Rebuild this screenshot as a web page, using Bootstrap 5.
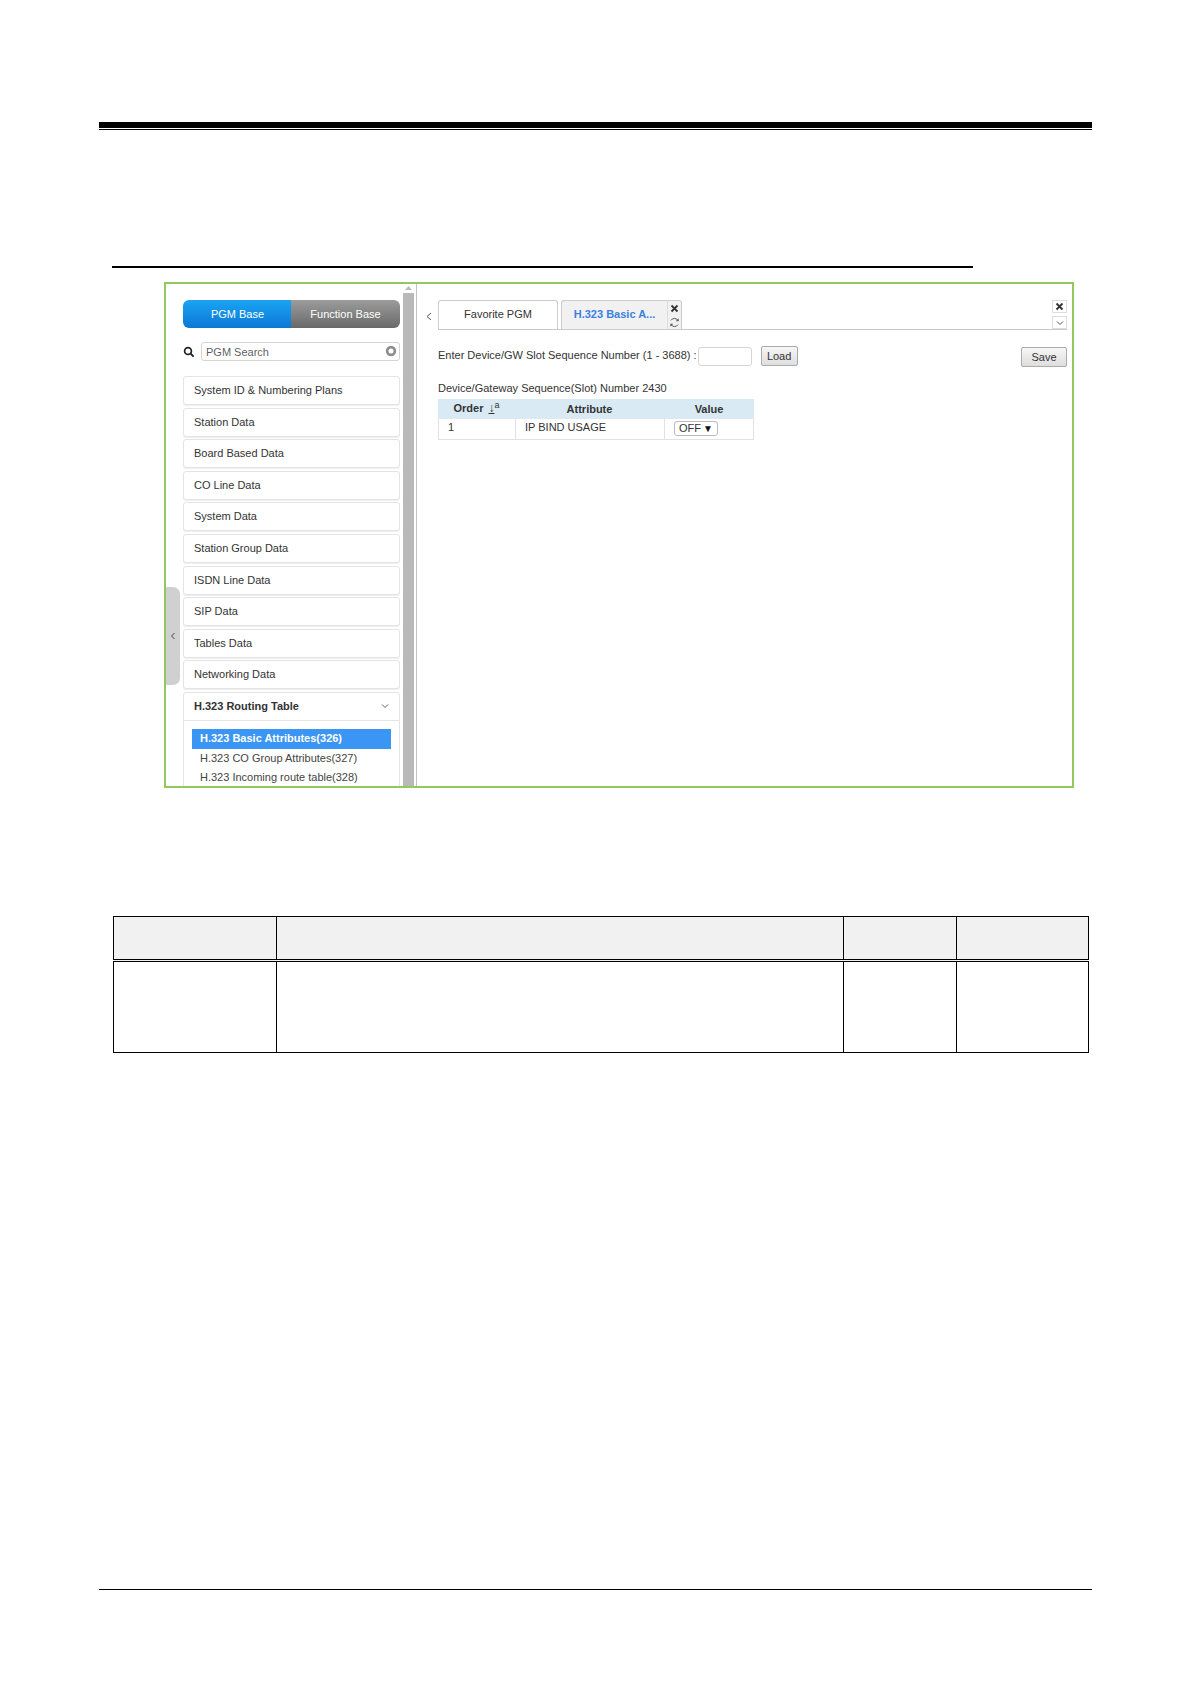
<!DOCTYPE html>
<html lang="en"><head><meta charset="utf-8"><title>H.323 Basic Attributes</title>
<link href="https://cdn.jsdelivr.net/npm/bootstrap@5.3.0/dist/css/bootstrap.min.css" rel="stylesheet">
<style>
html,body{background:#fff;margin:0}
body{font-family:"Liberation Sans",Arial,sans-serif;font-size:11px;color:#333;height:1684px;overflow:hidden}
.sheet{width:993px;margin-left:99px;padding-top:122px}
.head-rule{height:8px;border-top:6px solid #000;border-bottom:1px solid #000}
.sec-rule{width:861px;height:2px;background:#000;margin:136px 0 0 13px}
.shot{width:910px;height:506px;margin:14px 0 0 65px;border:2px solid #92c95c;overflow:hidden}
.side{width:251px;border-right:1px solid #c4c4c4;flex:none}
.gutter{width:17px;flex:none}
.handle{width:14px;height:98px;margin-top:303px;background:#d0d0d0;border-radius:0 7px 7px 0}
.side-main{width:217px;flex:none;padding-top:16px}
.base .btn{height:28px;font-size:11px;padding:0;color:#fff;border:0;font-weight:400;line-height:26px}
.b-blue{width:109px;flex:none!important;background:linear-gradient(#1ba4f2,#0b78d6)!important}
.b-gray{background:linear-gradient(#9c9c9c,#696969)!important}
.search-in{height:19px;min-height:0;width:199px;border:1px solid #d5d5d5;border-radius:3px;padding:0 4px;font-size:11px;color:#999}
.clear-ic{right:3px;top:3px}
.mt-search{margin-top:14px}
.items{margin-top:15px;gap:2.6px}
.s-item{background:#fff;border:1px solid #e4e4e4;border-radius:3px;height:29px;padding:0 10px;line-height:27px;box-shadow:0 1px 1px #eee}
.s-open{border:1px solid #e4e4e4;border-radius:3px;background:#fff}
.s-head{height:28px;padding:0 10px;line-height:27px;font-weight:700;border-bottom:1px solid #e4e4e4;color:#333}
.s-sub{padding:8px 8px 0}
.s-sub div{height:19.7px;line-height:19.7px;padding-left:8px;color:#444}
.s-sub .on{background:#3b95f4;color:#fff;font-weight:700}
.sbar{width:11px;margin-left:3px;flex:none;padding-top:0}
.sbar-up{height:9px}
.sbar-th{background:#b9b9b9;height:100%}
.panel{min-width:0}
.tabrow{margin:16px 5px 0 0;height:30px}
.tab-back{width:21px;flex:none;color:#555;padding:7px 0 0 3px}
.tabline{border-bottom:1px solid #c9c9c9;height:30px}
.t-a{width:120px;height:30px;border:1px solid #ccc;border-bottom:1px solid #c9c9c9;border-radius:3px 3px 0 0;text-align:center;line-height:27px;background:#fff}
.t-b{width:106px;height:30px;margin-left:3px;border:1px solid #ccc;border-right:0;border-radius:3px 0 0 0;background:#f1f1f1;color:#3b80e0;font-weight:700;text-align:center;line-height:27px;font-size:11px}
.t-x{width:15px;height:30px;border:1px solid #ccc;border-left:1px solid #ddd;background:#f1f1f1;border-radius:0 3px 0 0}
.t-x span{height:14px}
.win-btn{width:15px;height:13px;border:1px solid #ddd}
.win-col{gap:3px;padding-bottom:0}
.formrow{margin:15px 5px 0 21px}
.formrow>span{margin-top:-2px}
.num-in{width:54px;height:19px;min-height:0;margin-left:1px;border:1px solid #d5d5d5;border-radius:3px;padding:0}
.g-btn{border:1px solid #aaa;background:linear-gradient(#f6f6f6,#dedede);border-radius:2px;font-size:11px;color:#333;padding:0;line-height:18px}
.g-load{width:37px;height:20px;margin-left:9px}
.g-save{width:46px;height:20px;margin-top:2px}
.seq{margin:14px 0 0 21px;height:15px;line-height:15px}
.attr{width:316px;margin:3px 0 0 21px;table-layout:fixed;font-size:11px;border-collapse:separate;border-spacing:0}
.attr th{background:#d9eaf4;height:20px;padding:0 0 2px;font-weight:700;text-align:center;color:#333;border:0;box-shadow:none}
.attr td{height:21px;padding:0;border:0;border-bottom:1px solid #e2e2e2;color:#333;box-shadow:none}
.attr .sep{border-left:1px solid #e2e2e2}
.attr td:first-child{border-left:1px solid #e2e2e2;padding-left:9px}
.attr td:last-child{border-right:1px solid #e2e2e2}
.attr td.sep{padding-left:9px}
.sel{display:inline-flex;width:44px;height:15px;border:1px solid #bbb;border-radius:3px;align-items:center;justify-content:space-between;padding:0 4px;line-height:1;margin-top:2px}
.sel i{font-style:normal;font-size:10px;color:#111}
.sort{font-size:12px;margin-left:2px;font-weight:400}
.desc{width:975px;margin:128px 0 0 14px;table-layout:fixed;border-collapse:collapse;margin-bottom:0}
.desc th,.desc td{border:1px solid #000;padding:0;box-shadow:none}
.desc thead th{height:44px;background:#f1f1f1;border-bottom:3px double #000}
.desc td{height:92px;background:#fff}
.foot-rule{height:1px;background:#000;margin-top:536px}
</style></head>
<body>
<div class="sheet">
  <div class="head-rule"></div>
  <div class="sec-rule"></div>

  <div class="shot d-flex">
    <div class="side d-flex">
      <div class="gutter">
        <div class="handle d-flex align-items-center justify-content-center">
          <svg width="6" height="8" viewBox="0 0 6 8"><path d="M4.5 1 1.5 4l3 3" fill="none" stroke="#444" stroke-width="1"/></svg>
        </div>
      </div>
      <div class="side-main">
        <div class="btn-group base w-100" role="group">
          <button type="button" class="btn b-blue">PGM Base</button>
          <button type="button" class="btn b-gray">Function Base</button>
        </div>
        <div class="d-flex align-items-center justify-content-between mt-search">
          <svg width="12" height="12" viewBox="0 0 12 12"><circle cx="5" cy="5" r="3.4" fill="none" stroke="#222" stroke-width="1.7"/><path d="m7.6 7.6 3 3" stroke="#222" stroke-width="2"/></svg>
          <div class="position-relative">
            <input class="form-control search-in" placeholder="PGM Search" aria-label="PGM Search">
            <svg class="position-absolute clear-ic" width="12" height="12" viewBox="0 0 12 12"><circle cx="6" cy="6" r="5.2" fill="#8e8e8e"/><circle cx="6" cy="6" r="2.5" fill="#fff"/></svg>
          </div>
        </div>
        <div class="items d-flex flex-column">
          <div class="s-item">System ID &amp; Numbering Plans</div>
          <div class="s-item">Station Data</div>
          <div class="s-item">Board Based Data</div>
          <div class="s-item">CO Line Data</div>
          <div class="s-item">System Data</div>
          <div class="s-item">Station Group Data</div>
          <div class="s-item">ISDN Line Data</div>
          <div class="s-item">SIP Data</div>
          <div class="s-item">Tables Data</div>
          <div class="s-item">Networking Data</div>
          <div class="s-open">
            <div class="s-head d-flex justify-content-between align-items-center">H.323 Routing Table
              <svg width="8" height="6" viewBox="0 0 8 6"><path d="m1 1.5 3 3 3-3" fill="none" stroke="#666" stroke-width="1"/></svg>
            </div>
            <div class="s-sub">
              <div class="on">H.323 Basic Attributes(326)</div>
              <div>H.323 CO Group Attributes(327)</div>
              <div>H.323 Incoming route table(328)</div>
            </div>
          </div>
        </div>
      </div>
      <div class="sbar d-flex flex-column">
        <div class="sbar-up d-flex justify-content-center align-items-center">
          <svg width="7" height="4" viewBox="0 0 7 4"><path d="M3.5 0 7 4H0z" fill="#bbb"/></svg>
        </div>
        <div class="sbar-th flex-grow-1"></div>
      </div>
    </div>

    <div class="panel flex-grow-1">
      <div class="tabrow d-flex">
        <div class="tab-back text-center">
          <svg width="6" height="9" viewBox="0 0 6 9"><path d="M5 1 1 4.5 5 8" fill="none" stroke="#555" stroke-width="1"/></svg>
        </div>
        <div class="tabline flex-grow-1 d-flex justify-content-between">
          <div class="d-flex">
            <div class="t-a">Favorite PGM</div>
            <div class="t-b">H.323 Basic A...</div>
            <div class="t-x d-flex flex-column">
              <span class="d-flex align-items-center justify-content-center"><svg width="9" height="9" viewBox="0 0 9 9"><path d="m1.5 1.5 6 6m0-6-6 6" stroke="#333" stroke-width="1.8"/></svg></span>
              <span class="d-flex align-items-center justify-content-center"><svg width="11" height="11" viewBox="0 0 11 11"><path d="M9 3.6A4 4 0 0 0 2 3.4M2 7.4a4 4 0 0 0 7 .2" fill="none" stroke="#555" stroke-width="1"/><path d="M9.6 1.2v3H6.8zM1.4 9.8v-3h2.8z" fill="#555"/></svg></span>
            </div>
          </div>
          <div class="d-flex flex-column win-col">
            <div class="win-btn d-flex align-items-center justify-content-center"><svg width="9" height="9" viewBox="0 0 9 9"><path d="m1.5 1.5 6 6m0-6-6 6" stroke="#333" stroke-width="1.8"/></svg></div>
            <div class="win-btn d-flex align-items-center justify-content-center"><svg width="8" height="6" viewBox="0 0 8 6"><path d="m1 1.5 3 3 3-3" fill="none" stroke="#555" stroke-width="1"/></svg></div>
          </div>
        </div>
      </div>
      <div class="formrow d-flex align-items-center">
        <span>Enter Device/GW Slot Sequence Number (1 - 3688) :</span>
        <input class="form-control num-in" aria-label="Sequence number">
        <button type="button" class="g-btn g-load">Load</button>
        <button type="button" class="g-btn g-save ms-auto">Save</button>
      </div>
      <div class="seq">Device/Gateway Sequence(Slot) Number 2430</div>
      <table class="table attr">
        <colgroup><col style="width:77px"><col style="width:149px"><col style="width:90px"></colgroup>
        <thead><tr><th>Order <span class="sort"><u>↓</u><sup>a</sup></span></th><th>Attribute</th><th>Value</th></tr></thead>
        <tbody><tr><td>1</td><td class="sep">IP BIND USAGE</td><td class="sep"><span class="sel">OFF <i>▼</i></span></td></tr></tbody>
      </table>
    </div>
  </div>

  <table class="table desc">
    <colgroup><col style="width:163px"><col style="width:567px"><col style="width:113px"><col style="width:132px"></colgroup>
    <thead><tr><th></th><th></th><th></th><th></th></tr></thead>
    <tbody><tr><td></td><td></td><td></td><td></td></tr></tbody>
  </table>
  <div class="foot-rule"></div>
</div>
</body></html>
